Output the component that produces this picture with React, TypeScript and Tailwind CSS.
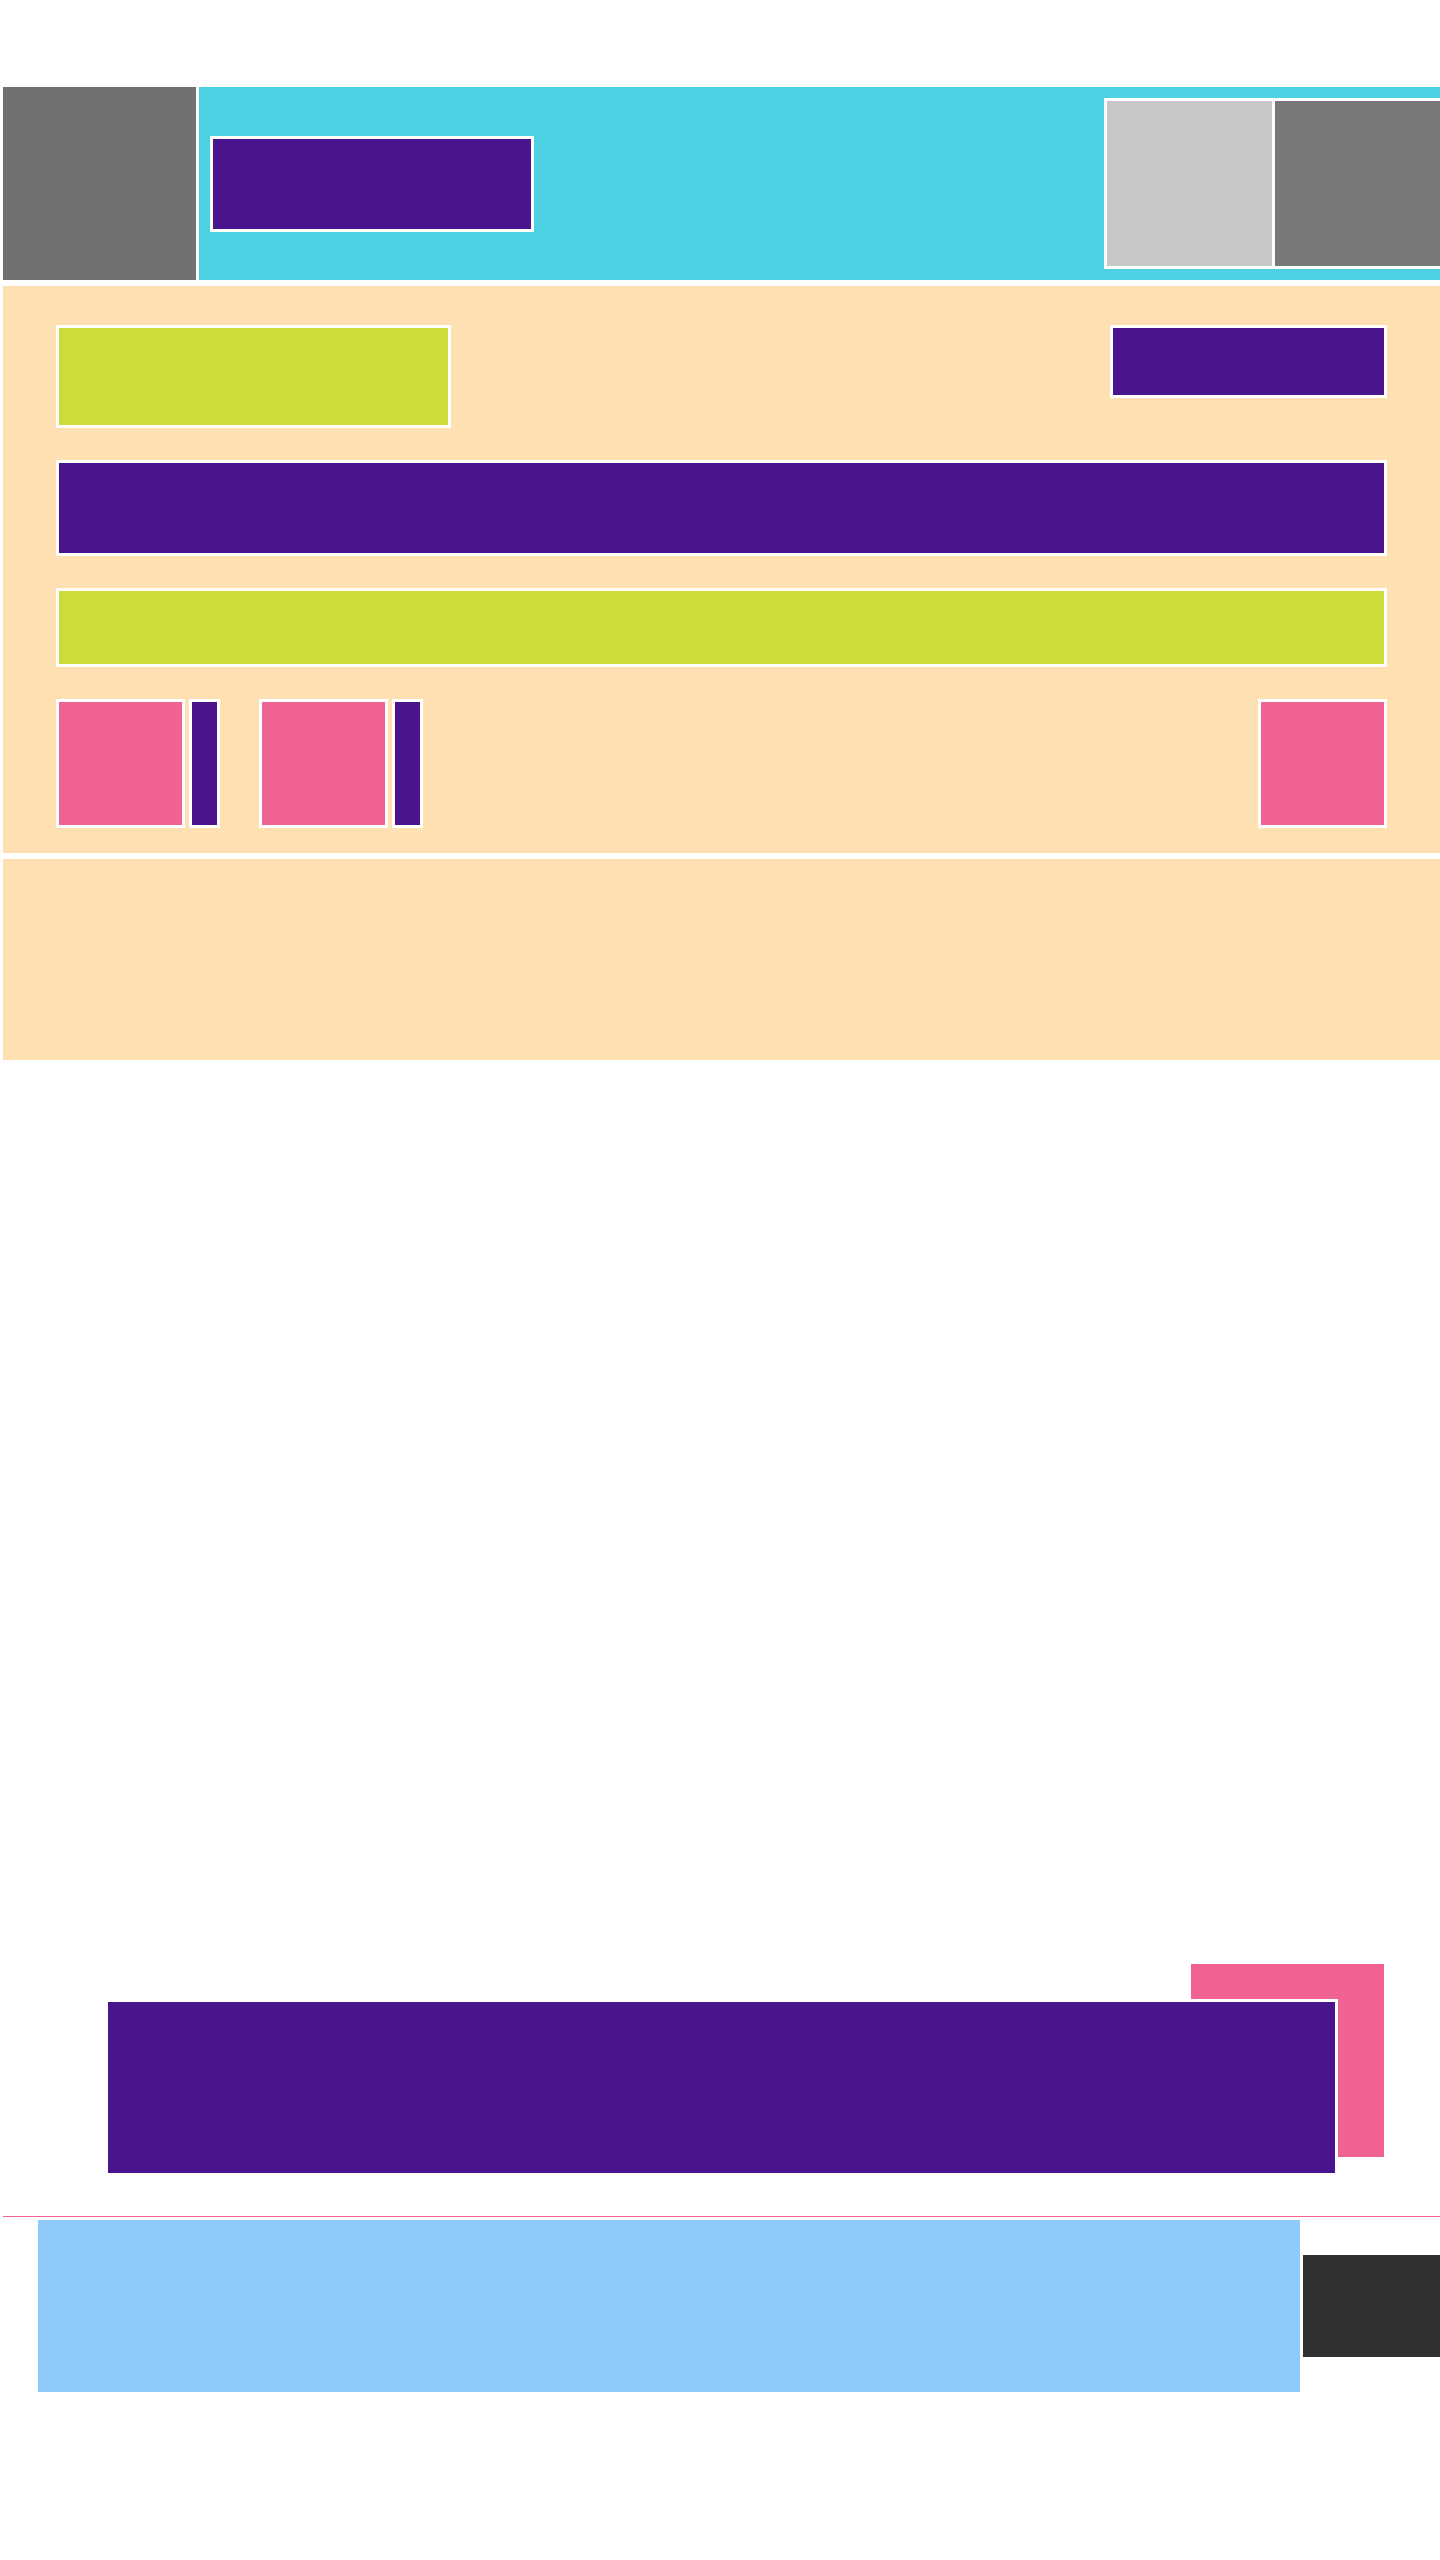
export default function App() {
  return (
    <div className="min-h-[2560px] w-full overflow-hidden bg-white pl-[3px] pt-[87px]">
      {/* Header */}
      <div className="flex h-[193px] gap-[3px]">
        <div className="w-[193px] shrink-0 bg-[#707070]" />
        <div className="flex flex-1 items-center overflow-hidden bg-[#4dd0e1] pl-[11px]">
          <div className="h-[96px] w-[324px] shrink-0 border-[3px] border-white bg-[#4a148c]" />
          <div className="ml-[570px] flex h-[171px] w-[339px] shrink-0 gap-[3px] border-[3px] border-white bg-white">
            <div className="h-[165px] w-[165px] bg-[#c7c7c7]" />
            <div className="h-[165px] w-[165px] bg-[#787878]" />
          </div>
        </div>
      </div>

      {/* Peach section 1 */}
      <div className="mt-[6px] flex h-[567px] flex-col gap-[32px] bg-[#ffe0b2] px-[53px] pb-[25px] pt-[39px]">
        <div className="flex items-start justify-between">
          <div className="h-[103px] w-[395px] border-[3px] border-white bg-[#cddc39]" />
          <div className="h-[73px] w-[277px] border-[3px] border-white bg-[#4a148c]" />
        </div>
        <div className="h-[96px] border-[3px] border-white bg-[#4a148c]" />
        <div className="h-[79px] border-[3px] border-white bg-[#cddc39]" />
        <div className="flex h-[129px]">
          <div className="h-[129px] w-[129px] border-[3px] border-white bg-[#f06292]" />
          <div className="ml-[4px] h-[129px] w-[31px] border-[3px] border-white bg-[#4a148c]" />
          <div className="ml-[39px] h-[129px] w-[129px] border-[3px] border-white bg-[#f06292]" />
          <div className="ml-[4px] h-[129px] w-[31px] border-[3px] border-white bg-[#4a148c]" />
          <div className="ml-auto h-[129px] w-[129px] border-[3px] border-white bg-[#f06292]" />
        </div>
      </div>

      {/* Peach section 2 */}
      <div className="mt-[6px] h-[201px] bg-[#ffe0b2]" />

      {/* Overlapping group */}
      <div className="relative mt-[904px] h-[212px]">
        <div className="ml-[1188px] h-[193px] w-[193px] bg-[#f06292]" />
        <div className="absolute left-[102px] top-[35px] h-[177px] w-[1233px] border-[3px] border-white bg-[#4a148c]" />
      </div>

      {/* Divider */}
      <div className="mt-[40px] h-px bg-[#f06292]" />

      {/* Footer row */}
      <div className="mt-[3px] flex items-center gap-[3px] pl-[35px]">
        <div className="h-[172px] w-[1262px] shrink-0 bg-[#90caf9]" />
        <div className="h-[102px] flex-1 bg-[#303030]" />
      </div>
    </div>
  );
}
